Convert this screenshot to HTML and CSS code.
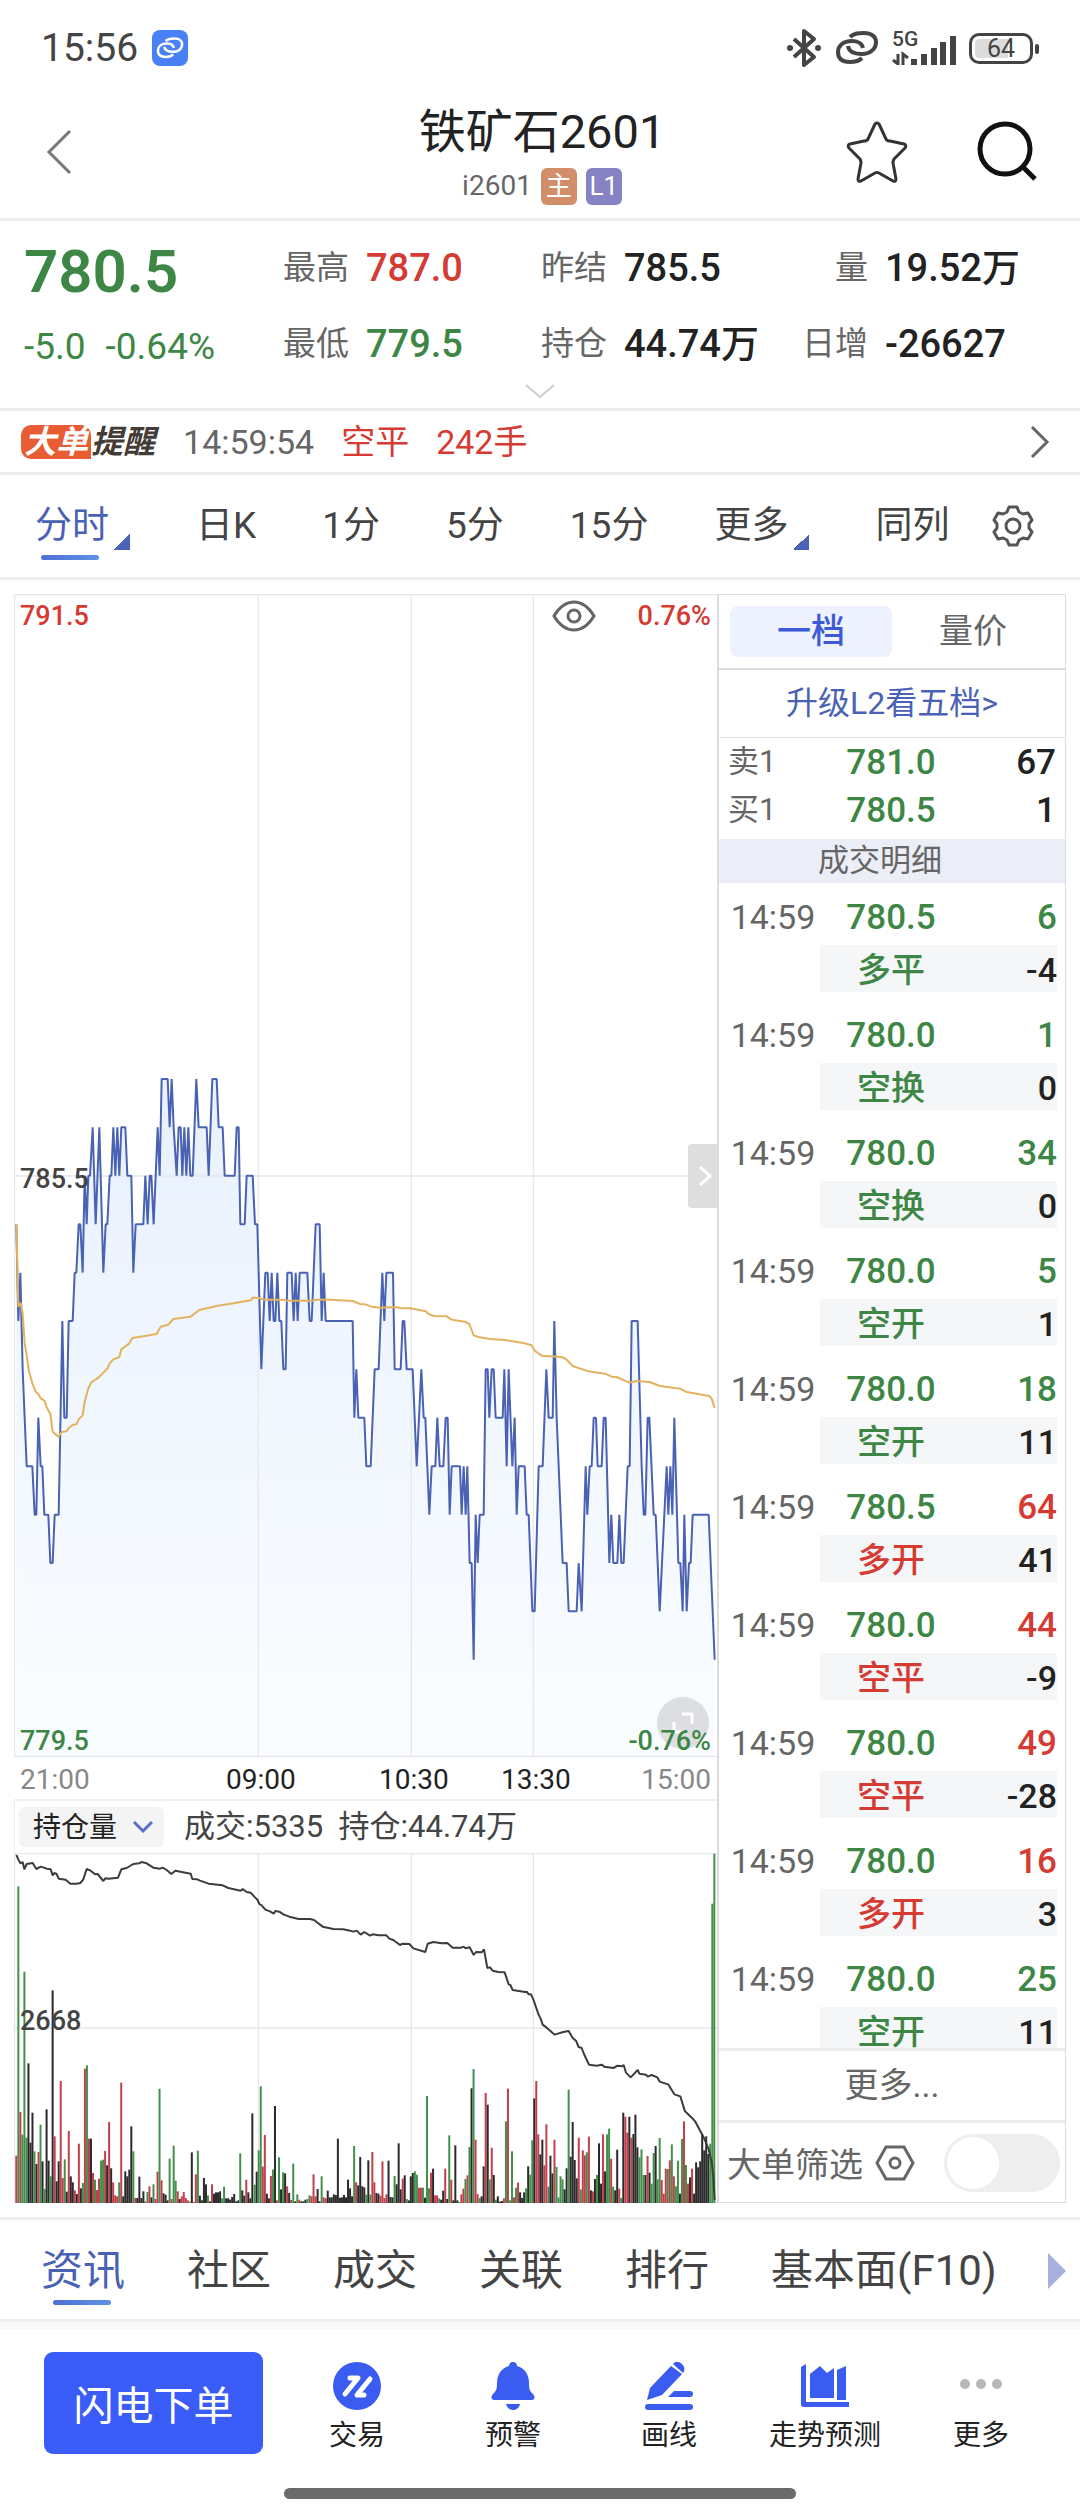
FILE: index.html
```html
<!DOCTYPE html>
<html lang="zh-CN">
<head>
  <meta charset="UTF-8" />
  <meta name="viewport" content="width=device-width, initial-scale=1.0"/>
  <title>铁矿石2601</title>
  <link rel="stylesheet" href="styles.css">
</head>
<body>

<div class="status">
  <span class="clock">15:56</span>
  <span class="app-dot">
    <svg width="28" height="28" viewBox="0 0 44 34" fill="none" stroke="#fff" stroke-width="4"><path d="M15 6c4-4 9-4 14-4 9 0 12 5 12 9 0 8-7 12-14 12-8 0-13-2-14-8"/><path d="M28 17c-1-5-6-7-11-7C8 10 3 15 3 21c0 7 4 10 12 10 6 0 9-1 12-4"/></svg>
  </span>
  <div class="status-icons">
    <svg width="36" height="40" viewBox="0 0 36 40" fill="none" stroke="#444" stroke-width="4" stroke-linejoin="round"><path d="M8 11l20 18-10 8V3l10 8L8 29"/><circle cx="4" cy="20" r="2" fill="#444" stroke-width="2"/><circle cx="32" cy="20" r="2" fill="#444" stroke-width="2"/></svg>
    <svg width="44" height="34" viewBox="0 0 44 34" fill="none" stroke="#444" stroke-width="4"><path d="M15 6c4-4 9-4 14-4 9 0 12 5 12 9 0 8-7 12-14 12-8 0-13-2-14-8"/><path d="M28 17c-1-5-6-7-11-7C8 10 3 15 3 21c0 7 4 10 12 10 6 0 9-1 12-4"/></svg>
    <div class="signal">
      <span class="net">5G</span>
      <svg width="64" height="34" viewBox="0 0 64 34" fill="none" stroke="#444"><path stroke-width="6" d="M22 34v-6M32 34V23M42 34V17M51 34V11M61 34V5"/><path stroke-width="3" d="M6 23v10l-5-4M11 34V23l5 4"/></svg>
    </div>
    <span class="battery">64</span>
  </div>
</div>

<header class="topbar">
  <button class="icon-btn" aria-label="返回">
    <svg width="26" height="46" viewBox="0 0 26 46" fill="none" stroke="#777" stroke-width="3"><path d="M24 2L3 23l21 21"/></svg>
  </button>
  <div class="title">
    <h1>铁矿石2601</h1>
    <p>i2601 <span class="tag tag-main">主</span><span class="tag tag-level">L1</span></p>
  </div>
  <div class="top-actions">
    <button class="icon-btn" aria-label="自选">
      <svg width="62" height="62" viewBox="0 0 62 62" fill="none" stroke="#333" stroke-width="3" stroke-linejoin="round"><path d="M29 3q2-2 4 0l7 15q1 2 4 2l14 3q3 1 1 4L48 38q-1 2-1 4l3 16q0 3-3 2l-14-8q-2-1-4 0l-14 8q-3 1-3-2l3-16q0-2-1-4L3 27q-2-3 1-4l14-3q3 0 4-2z"/></svg>
    </button>
    <button class="icon-btn" aria-label="搜索">
      <svg width="62" height="62" viewBox="0 0 62 62" fill="none" stroke="#111" stroke-width="5"><circle cx="29" cy="28" r="25"/><path d="M47 46l12 12"/></svg>
    </button>
  </div>
</header>

<section class="quote">
  <div class="last green">780.5</div>
  <div class="stat"><span>最高</span><b class="red">787.0</b></div>
  <div class="stat"><span>昨结</span><b>785.5</b></div>
  <div class="stat"><span>量</span><b>19.52万</b></div>
  <div class="change green"><span>-5.0</span><span>-0.64%</span></div>
  <div class="stat"><span>最低</span><b class="green">779.5</b></div>
  <div class="stat"><span>持仓</span><b>44.74万</b></div>
  <div class="stat"><span>日增</span><b>-26627</b></div>
  <button class="icon-btn expand" aria-label="展开">
    <svg width="30" height="16" viewBox="0 0 30 16" fill="none" stroke="#ccc" stroke-width="2"><path d="M1 2l14 12L29 2"/></svg>
  </button>
</section>

<a class="alert" href="#">
  <span class="alert-logo"><i>大单</i><em>提醒</em></span>
  <span class="alert-time">14:59:54</span>
  <span class="red">空平</span>
  <span class="red">242手</span>
  <svg class="alert-arrow" width="20" height="34" viewBox="0 0 20 34" fill="none" stroke="#666" stroke-width="3"><path d="M2 2l15 15L2 32"/></svg>
</a>

<div class="periods">
  <nav>
    <a class="active corner" href="#">分时</a>
    <a href="#">日K</a>
    <a href="#">1分</a>
    <a href="#">5分</a>
    <a href="#">15分</a>
    <a class="corner" href="#">更多</a>
    <a href="#">同列</a>
  </nav>
  <button class="icon-btn" aria-label="设置">
    <svg width="42" height="42" viewBox="0 0 42 42" fill="none" stroke="#555" stroke-width="3" stroke-linejoin="round"><path d="M17 2h8l2 5 4 2 5-1 4 7-3 4v4l3 4-4 7-5-1-4 2-2 5h-8l-2-5-4-2-5 1-4-7 3-4v-4l-3-4 4-7 5 1 4-2z"/><circle cx="21" cy="21" r="7"/></svg>
  </button>
</div>

<main class="board">
  <div class="charts">
    <div class="chart price-chart">
      <svg id="priceChart" viewBox="0 0 2109 3489" preserveAspectRatio="none">
        <defs>
          <linearGradient id="fade" x1="0" y1="1455" x2="0" y2="3489" gradientUnits="userSpaceOnUse">
            <stop offset="0" stop-color="#e8f1fe"/>
            <stop offset="1" stop-color="#fafdff"/>
          </linearGradient>
        </defs>
      </svg>
      <div class="labels">
        <div class="label-row red">
          <span>791.5</span>
          <span class="right-labels">
            <svg width="44" height="32" viewBox="0 0 44 32" fill="none" stroke="#666" stroke-width="3"><path d="M2 16C8 6 15 2 22 2s14 4 20 14c-6 10-13 14-20 14S8 26 2 16z"/><circle cx="22" cy="16" r="6"/></svg>
            <span>0.76%</span>
          </span>
        </div>
        <div class="label-row dark"><span>785.5</span></div>
        <div class="label-row green"><span>779.5</span><span>-0.76%</span></div>
      </div>
      <button class="drawer" aria-label="收起盘口">
        <svg width="14" height="22" viewBox="0 0 14 22" fill="none" stroke="#fff" stroke-width="3"><path d="M2 2l10 9-10 9"/></svg>
      </button>
      <button class="zoom-btn" aria-label="全屏">
        <svg width="22" height="22" viewBox="0 0 22 22" fill="none" stroke="#fff" stroke-width="3"><path d="M10 2h10v10M2 10v10h10"/></svg>
      </button>
    </div>

    <div class="axis">
      <span>21:00</span>
      <span class="tick">09:00</span>
      <span class="tick">10:30</span>
      <span class="tick">13:30</span>
      <span>15:00</span>
    </div>

    <div class="indicator">
      <div class="picker">
        <select aria-label="指标"><option>持仓量</option></select>
        <svg width="20" height="14" viewBox="0 0 20 14" fill="none" stroke="#5a70c8" stroke-width="3"><path d="M1 2l9 9 9-9"/></svg>
      </div>
      <span>成交:5335&nbsp; 持仓:44.74万</span>
    </div>

    <div class="chart volume-chart">
      <svg id="volumeChart" viewBox="0 0 2109 1050" preserveAspectRatio="none"></svg>
      <div class="labels"><div class="label-row middle">2668</div></div>
    </div>
  </div>

  <aside class="book">
    <div class="book-tabs">
      <button class="on">一档</button>
      <button>量价</button>
    </div>
    <a class="upgrade" href="#">升级L2看五档&gt;</a>
    <table class="depth">
      <tr><th>卖1</th><td class="green">781.0</td><td>67</td></tr>
      <tr><th>买1</th><td class="green">780.5</td><td>1</td></tr>
    </table>
    <h2>成交明细</h2>
    <div class="trades">
      <table>
        <tbody id="trades"></tbody>
      </table>
    </div>
    <a class="more" href="#">更多...</a>
    <div class="filter">
      <label for="bigOnly">大单筛选</label>
      <svg width="40" height="36" viewBox="0 0 40 36" fill="none" stroke="#666" stroke-width="3"><path d="M11 2h18l9 16-9 16H11L2 18z"/><circle cx="20" cy="18" r="5"/></svg>
      <input type="checkbox" id="bigOnly">
    </div>
  </aside>
</main>

<nav class="sections">
  <a class="active" href="#">资讯</a>
  <a href="#">社区</a>
  <a href="#">成交</a>
  <a href="#">关联</a>
  <a href="#">排行</a>
  <a href="#">基本面(F10)</a>
  <svg width="18" height="36" viewBox="0 0 18 36" fill="#a5b0dd"><path d="M0 0l18 18L0 36z"/></svg>
</nav>

<footer class="actions">
  <button class="order">闪电下单</button>
  <a href="#">
    <svg width="48" height="48" viewBox="0 0 48 48"><circle cx="24" cy="24" r="24" fill="#3a5cf0"/><path d="M17 16h8L12 32M37 17L24 33h7" fill="none" stroke="#fff" stroke-width="5" stroke-linejoin="round" stroke-linecap="round"/></svg>
    交易
  </a>
  <a href="#">
    <svg width="48" height="48" viewBox="0 0 48 48" fill="#3a5cf0"><path d="M24 0c3 0 4 2 4 4 8 2 12 9 12 17 0 7 1 8 4 11 3 4 1 6-1 6H5c-2 0-4-2-1-6 3-3 4-4 4-11C8 13 12 6 20 4c0-2 1-4 4-4zM17 42h14c-1 4-4 6-7 6s-6-2-7-6z"/></svg>
    预警
  </a>
  <a href="#">
    <svg width="48" height="48" viewBox="0 0 48 48" fill="#3a5cf0"><path d="M26 4l11 8-20 21L2 38l3-12zM28 2c2-3 6-3 9 0s3 6 1 9z"/><path d="M29 29h16a3 3 0 0 1 0 6H23zM3 42h42a3 3 0 0 1 0 6H3a3 3 0 0 1 0-6z"/></svg>
    画线
  </a>
  <a href="#">
    <svg width="48" height="48" viewBox="0 0 48 48" fill="#3a5cf0"><path d="M0 5l5-3v38h43v5H3q-3 0-3-3zM9 36V12l10-8 7 7 7-5v30zM36 36V8l9-4v34h-9z"/></svg>
    走势预测
  </a>
  <a href="#">
    <svg width="48" height="48" viewBox="0 0 48 48" fill="#b8b8b8"><circle cx="8" cy="22" r="5"/><circle cx="24" cy="22" r="5"/><circle cx="40" cy="22" r="5"/></svg>
    更多
  </a>
</footer>
<div class="home-bar"></div>

<script src="script.js"></script>
</body>
</html>
```

FILE: styles.css
```css
* {
  box-sizing: border-box;
}
body {
  margin: 0;
  background: #fff;
  color: #222;
  font-family: Roboto, "Noto Sans CJK SC", sans-serif;
}
a {
  color: inherit;
  text-decoration: none;
}
button {
  font-family: inherit;
  border: none;
  padding: 0;
  background: none;
  cursor: pointer;
}
svg {
  display: block;
  flex-shrink: 0;
}
.icon-btn {
  display: block;
}
.green {
  color: #3d8645;
}
.red {
  color: #d53a33;
}

/* phone status bar */
.status {
  display: flex;
  align-items: center;
  height: 96px;
  padding: 0 47px 0 41px;
  color: #444;
}
.clock {
  font-size: 39px;
}
.app-dot {
  display: flex;
  align-items: center;
  justify-content: center;
  width: 36px;
  height: 36px;
  margin-left: 14px;
  border-radius: 8px;
  background: #4a80f5;
}
.status-icons {
  display: flex;
  align-items: center;
  gap: 13px;
  margin-left: auto;
}
.signal {
  display: grid;
}
.signal > * {
  grid-area: 1 / 1;
}
.net {
  font-size: 21px;
  line-height: 16px;
  font-weight: 500;
}
.battery {
  position: relative;
  width: 64px;
  height: 31px;
  padding: 3px;
  border: 3px solid #444;
  border-radius: 10px;
  background: linear-gradient(90deg, #dcdcdc 64%, #fff 64%) content-box;
  font-size: 25px;
  line-height: 20px;
  text-align: center;
}
.battery::after {
  content: "";
  position: absolute;
  right: -9px;
  top: 8px;
  width: 4px;
  height: 10px;
  border-radius: 2px;
  background: #444;
}

/* title */
.topbar {
  display: grid;
  grid-template-columns: 1fr auto 1fr;
  align-items: center;
  height: 125px;
  padding: 0 42px 14px 46px;
  border-bottom: 3px solid #eee;
}
.title {
  padding-top: 4px;
  text-align: center;
}
.title h1 {
  margin: 0;
  font-size: 47px;
  line-height: 64px;
  font-weight: 400;
}
.title p {
  display: flex;
  align-items: center;
  justify-content: center;
  gap: 9px;
  margin: 0;
  font-size: 28px;
  line-height: 44px;
  color: #666;
}
.tag {
  width: 36px;
  height: 37px;
  border-radius: 6px;
  color: #fff;
  font-size: 26px;
  line-height: 37px;
}
.tag-main {
  background: #d28e69;
}
.tag-level {
  background: #8583c3;
}
.top-actions {
  display: flex;
  justify-content: flex-end;
  gap: 68px;
}

/* quote numbers */
.quote {
  display: grid;
  grid-template-columns: 257fr 258fr 261fr 256fr;
  grid-template-rows: 92px 60px 34px;
  align-items: center;
  padding: 1px 24px 0;
  border-bottom: 3px solid #eee;
}
.last {
  padding-top: 6px;
  font-size: 60px;
  font-weight: 600;
}
.change {
  display: flex;
  gap: 20px;
  padding-top: 4px;
  font-size: 37px;
}
.stat {
  display: flex;
  align-items: center;
  gap: 17px;
  white-space: nowrap;
}
.stat span {
  width: 68px;
  font-size: 33px;
  line-height: 46px;
  color: #666;
  text-align: right;
}
.stat b {
  font-size: 38px;
  line-height: 48px;
  font-weight: 500;
}
.expand {
  grid-column: 1 / -1;
  justify-self: center;
}

/* big order alert */
.alert {
  display: flex;
  align-items: center;
  height: 64px;
  padding: 0 30px 0 21px;
  border-bottom: 3px solid #eee;
  font-size: 34px;
  line-height: 40px;
}
.alert-logo {
  display: flex;
  margin-right: 28px;
  font-size: 32px;
  line-height: 34px;
  font-weight: 700;
}
.alert-logo i {
  padding: 0 3px;
  border-radius: 10px 10px 0 10px;
  background: #e85c34;
  color: #fff;
}
.alert-logo em {
  color: #443a36;
}
.alert-time {
  color: #666;
}
.alert .red {
  margin-left: 27px;
}
.alert-arrow {
  margin-left: auto;
}

/* chart period tabs */
.periods {
  display: flex;
  align-items: center;
  justify-content: space-between;
  height: 105px;
  padding: 0 46px 0 35px;
  border-bottom: 3px solid #eee;
}
.periods nav {
  display: flex;
  gap: 66px;
  font-size: 37px;
  line-height: 56px;
  color: #444;
}
.corner {
  padding-right: 21px;
  background: linear-gradient(135deg, transparent 50%, #4a62b8 50%) right 0 bottom 4px / 16px 16px no-repeat;
}
.periods a,
.sections a {
  position: relative;
}
.periods .active,
.sections .active {
  color: #4a62b3;
}
.periods .active::after,
.sections .active::after {
  content: "";
  position: absolute;
  left: 6px;
  bottom: -6px;
  width: 58px;
  height: 5px;
  border-radius: 3px;
  background: linear-gradient(90deg, #4f6fd4, #5f92e6);
}

/* charts and order book */
.board {
  display: grid;
  grid-template-columns: 703fr 349fr;
  padding: 14px;
  border-bottom: 3px solid #eee;
}
.charts {
  min-width: 0;
}
.chart {
  display: grid;
  position: relative;
}
.chart > svg,
.labels {
  grid-area: 1 / 1;
  width: 100%;
}
.price-chart {
  height: 1163px;
}
.volume-chart {
  height: 350px;
}
.chart > svg {
  height: 100%;
  min-height: 0;
}
.labels {
  display: flex;
  flex-direction: column;
  justify-content: space-between;
  padding: 6px 6px 0;
  font-size: 27px;
  line-height: 32px;
  font-weight: 500;
  z-index: 1;
}
.label-row {
  display: flex;
  justify-content: space-between;
}
.dark,
.middle {
  color: #444;
}
.volume-chart .labels {
  justify-content: center;
  padding: 0 6px 14px;
}
.right-labels {
  display: flex;
  align-items: center;
  gap: 42px;
}
.drawer {
  position: absolute;
  right: 0;
  top: 550px;
  width: 29px;
  height: 64px;
  padding-left: 10px;
  border-radius: 4px 0 0 4px;
  background: #dedede;
}
.zoom-btn {
  position: absolute;
  right: 8px;
  bottom: 8px;
  width: 52px;
  height: 52px;
  padding-left: 15px;
  border-radius: 50%;
  background: #dcdee1;
}
.axis {
  display: grid;
  grid-template-columns: 206fr 153fr 122fr 140fr 70fr;
  height: 44px;
  padding: 0 6px;
  border-bottom: 2px solid #f0f0f0;
  font-size: 28px;
  line-height: 46px;
  color: #888;
}
.axis .tick {
  color: #222;
}
.axis span:last-child {
  text-align: right;
}
.indicator {
  display: flex;
  align-items: center;
  gap: 20px;
  height: 52px;
  padding-left: 4px;
  border-left: 1px solid #eee;
  font-size: 31px;
  line-height: 44px;
  color: #444;
}
.picker {
  display: grid;
  align-items: center;
}
.picker > * {
  grid-area: 1 / 1;
}
.picker svg {
  justify-self: end;
  margin-right: 11px;
  pointer-events: none;
}
.picker select {
  appearance: none;
  width: 145px;
  height: 40px;
  padding: 0 0 0 14px;
  border: none;
  border-radius: 6px;
  background: #f4f4f4;
  color: #222;
  font-family: inherit;
  font-size: 28px;
}

.book {
  display: flex;
  flex-direction: column;
  border: 1px solid #dcdcdc;
  border-left-width: 2px;
}
.book-tabs {
  display: flex;
  padding: 11px;
  border-bottom: 2px solid #dcdcdc;
}
.book-tabs button {
  flex: 1;
  height: 51px;
  border-radius: 8px;
  font-size: 34px;
  line-height: 51px;
  color: #666;
}
.book-tabs .on {
  background: #eef1fe;
  color: #3c5ad8;
  font-weight: 500;
}
.upgrade {
  border-bottom: 1px solid #e4e4e4;
  font-size: 32px;
  line-height: 67px;
  text-align: center;
  color: #4a62b3;
}
.book table {
  width: 100%;
  table-layout: fixed;
  border-spacing: 0;
}
.book th,
.book td {
  padding: 0;
  font-weight: 500;
  font-size: 35px;
  text-align: center;
}
.book th:first-child,
.book td:first-child {
  width: 101px;
}
.book td:nth-child(2) {
  width: 142px;
}
.book td:last-child {
  text-align: right;
}
.depth {
  padding: 0 9px 5px 0;
}
.depth tr {
  height: 48px;
}
.book .depth th {
  padding-left: 9px;
  font-size: 31px;
  line-height: 40px;
  font-weight: 400;
  text-align: left;
  color: #666;
}
.book h2 {
  margin: 0;
  padding-right: 24px;
  background: #ebeef7;
  font-size: 31px;
  line-height: 44px;
  font-weight: 400;
  text-align: center;
  color: #666;
}
.trades {
  max-height: 1165px;
  padding-right: 8px;
  overflow: hidden;
}
.book .trades td {
  height: 62px;
  padding-top: 6px;
  line-height: 47px;
}
.book .trades .time {
  padding-left: 7px;
  font-size: 34px;
  font-weight: 400;
  color: #666;
}
.book .trades .kind td {
  height: 56px;
  padding: 3px 0 0;
  border-bottom: 9px solid #fff;
  background: #f5f6f8;
  font-size: 34px;
  line-height: 38px;
}
.book .trades .kind td:first-child {
  background: none;
}
.more {
  border-top: 3px solid #eee;
  border-bottom: 3px solid #eee;
  font-size: 34px;
  line-height: 69px;
  text-align: center;
  color: #666;
}
.filter {
  display: flex;
  flex: 1;
  align-items: center;
  padding: 0 5px 0 8px;
  font-size: 34px;
  color: #666;
}
.filter svg {
  margin-left: 12px;
}
.filter input {
  appearance: none;
  width: 116px;
  height: 58px;
  margin: 0 0 0 auto;
  padding: 3px;
  border-radius: 29px;
  background: #eee;
}
.filter input::before {
  content: "";
  display: block;
  width: 52px;
  height: 52px;
  border-radius: 50%;
  background: #fff;
}
.filter input:checked::before {
  margin-left: auto;
}

/* bottom */
.sections {
  display: flex;
  align-items: center;
  gap: 62px;
  height: 102px;
  padding: 2px 14px 0 41px;
  border-bottom: 3px solid #eee;
  font-size: 42px;
  line-height: 60px;
  color: #444;
  white-space: nowrap;
}
.sections .active::after {
  left: 12px;
  bottom: -4px;
}
.sections svg {
  margin: 0 0 0 auto;
}
.sections a:nth-last-of-type(1) {
  margin-right: -20px;
}
.actions {
  display: flex;
  align-items: center;
  height: 159px;
  padding: 0 21px 4px 44px;
  border-top: 7px solid #f8f8f8;
}
.order {
  width: 219px;
  height: 102px;
  margin-right: 16px;
  border-radius: 9px;
  background: #3a5cf8;
  color: #fff;
  font-size: 40px;
}
.actions a {
  display: flex;
  flex: 1;
  flex-direction: column;
  align-items: center;
  gap: 5px;
  padding-top: 12px;
  font-size: 28px;
  line-height: 42px;
  white-space: nowrap;
}
.home-bar {
  width: 512px;
  height: 11px;
  margin: 7px auto 20px;
  border-radius: 6px;
  background: #6b6b6b;
}
```

FILE: script.js
```js
const NS = "http://www.w3.org/2000/svg";

function add(svg, tag, attrs) {
  const el = document.createElementNS(NS, tag);
  for (const key in attrs) el.setAttribute(key, attrs[key]);
  svg.appendChild(el);
}

// "x y x y ..." -> [[x, y], ...], moved by dx / dy
function series(text, dx, dy) {
  const n = text.trim().split(/\s+/).map(Number);
  const out = [];
  for (let i = 0; i < n.length; i += 2) out.push([n[i] + dx, n[i + 1] + dy]);
  return out;
}

function line(svg, points, color, width) {
  add(svg, "polyline", {
    points: points.map(p => p.join(",")).join(" "),
    fill: "none", stroke: color, "stroke-width": width, "stroke-linejoin": "bevel"
  });
}

function grid(svg, height, middle) {
  const d = `M2 0V${height}M733 0V${height}M1192 0V${height}M1558 0V${height}M0 2H2109M0 ${middle}H2109M0 ${height - 2}H2109`;
  add(svg, "path", { d, stroke: "#e6e8ee", "stroke-width": 4, fill: "none" });
}

// price: x, ticks below 786.5
const night = `49 3 55 5 61 4 68 6 80 8 97 8 104 9 109 9 115 7 122 8 127 8 133 9 145 9 151 10 158 10 164 9 176 9
  187 5 193 7 200 7 206 5 218 5 224 4 229 4 236 3 241 3 248 4 254 2 260 3 265 2 270 2 278 1 287 3 298 1 310 4
  317 3 322 3 329 2 334 2 340 1 346 2 352 1 358 2 364 1 376 1 382 2 394 2 400 4 407 3 430 3 436 2 443 3 449 2
  454 2 461 3 473 1 479 2 485 0 503 0 509 1 515 0 521 1 530 2 536 1 542 1 547 2 553 1 559 2 565 1 571 2 578 2
  589 0 596 1 620 1 626 2 637 0 650 0 656 1 668 1 674 2 704 2 710 1 716 1 721 3 734 3 740 2 758 2 765 3 772 3
  784 6 796 4 803 4 809 5 815 4 821 5 826 5 832 4 838 5 844 5 850 6 857 6 862 4 875 4 881 5 887 4 893 5 899 4
  922 4 929 5 935 5 947 3 959 3 965 5 971 4 977 5`;
const day = `8 5 13 7 19 6 25 7 43 7 49 8 62 8 74 6 86 6 97 4 103 5 109 4 129 4 134 6 152 6 158 5 163 5 170 6 188 6
  200 8 214 6 221 7 226 7 238 9 245 8 256 8 262 7 269 8 280 8 287 7 293 7 299 9 305 8 330 8 335 9 341 8 347 9
  352 8 359 10 365 10 371 12 377 9 383 10 389 9 401 9 407 6 413 6 418 7 425 6 431 6 437 7 458 7 463 6 470 8
  476 6 487 8 494 7 500 9 506 8 524 8 530 9 536 9 547 11 554 11 566 8 578 8 589 6 596 7 608 7 613 5 620 7
  638 10 650 10 656 11 680 11 686 10 695 11 707 8 712 9 719 8 725 8 731 7 738 7 743 8 755 8 761 7 767 7
  778 10 784 9 790 10 802 10 808 9 814 10 821 10 833 8 839 8 845 5 863 5 875 8 881 9 886 9 893 7 898 7 911 9
  917 9 929 11 950 8 955 9 961 8 967 9 973 7 985 10 991 10 998 11 1003 9 1010 11 1017 10 1022 10 1028 9
  1076 9 1094 12`;
const price = series(night, -42, 0).concat(series(day, 1008, 0)).map(p => [p[0], Math.round(1455 + p[1] * 145.2)]);

const average = series(`49 492 55 740 62 728 68 760 74 850 80 885 86 930 97 970 107 995 115 1002 122 1015 134 1023
  140 1042 151 1062 158 1115 175 1130 185 1116 200 1114 206 1104 218 1095 229 1093 236 1078 248 1066 254 1025
  265 985 274 967 295 953 322 926 329 910 340 898 358 891 364 868 388 850 397 834 430 829 470 822 482 800
  505 794 520 777 572 770 598 750 650 738 700 730 752 721 758 713 778 714 790 719 850 719 860 722 935 722
  950 719 990 719`, -42, 1398).concat(series(`8 363 30 372 45 373 65 380 90 383 135 381 150 384 180 385 228 394
  235 402 252 408 290 409 305 419 345 425 358 432 365 450 371 466 385 471 420 477 465 480 520 489 545 496
  555 513 575 527 635 531 648 537 668 558 715 574 765 581 785 590 800 591 838 608 860 603 898 606 930 618
  990 626 1010 636 1078 648 1085 656 1094 684`, 1008, 1758));

const interest = series(`49 45 55 58 61 70 68 66 73 88 80 72 98 69 109 87 122 80 140 86 152 88 158 106 163 99
  170 102 176 116 197 119 211 131 229 131 241 129 250 118 260 87 272 92 285 103 293 102 310 123 316 115
  325 116 354 113 364 88 380 84 400 72 418 70 424 66 440 70 460 83 480 86 488 83 500 90 514 102 526 92
  572 101 577 117 592 118 600 122 626 131 668 136 685 144 722 152 728 147 740 156 752 158 765 172 773 180
  778 192 785 196 796 209 810 214 821 221 826 213 838 215 850 223 868 230 896 237 930 237 942 240 968 260
  1000 267 1030 268`, -42, -39).concat(series(`0 272 10 275 20 272 32 284 43 276 60 287 68 283 85 286 109 286
  118 296 130 300 150 315 158 311 178 312 190 325 226 336 233 311 250 306 275 310 292 309 308 323 333 323
  341 320 347 325 359 322 371 345 378 336 395 337 402 328 412 384 420 382 428 392 445 396 464 397 476 433
  481 435 488 450 525 456 530 455 536 463 543 463 550 478 565 522 572 536 578 554 590 563 614 584 640 576
  656 573 668 594 678 602 686 621 695 624 702 642 717 674 740 677 755 674 763 680 790 684 803 677 815 679
  821 675 828 698 842 712 863 690 868 701 888 704 893 710 905 705 922 712 929 725 956 734 960 742 973 763
  991 769 1005 814 1030 838 1036 845 1060 890 1075 925 1085 965 1090 1010 1094 1080`, 1008, -39));

// volume per minute, r = up, g = down, k = flat
const volume = [
  { from: 7, to: 715, bars: `r142 g950 r273 g205 g694 g196 k419 k181 k271 g155 k117 r153 g235 k125 g42 k281 k127 g80
    k638 r200 k65 k125 r366 r75 g131 k34 r216 k80 k62 r38 k27 r178 k44 g60 r403 g413 r193 k193 r90 g70 r39 r73 g127
    g130 r156 k113 r243 k104 r62 r23 r20 g62 r361 k20 k95 k80 k100 k230 g155 r15 k15 k79 k15 k35 r5 g33 r50 k17 g56
    r12 r94 g343 r68 k29 k25 k8 g133 r12 g172 g67 r35 k12 r20 r33 r15 r8 g4 k152 r3 r86 g157 k22 k8 k75 k56 g23 k5
    r56 k28 k32 k32 k35 g14 g49 k14 k14 k10 k18 k27 k5 k8 g149 k38 k22 r70 k32 k14 k269` },
  { from: 722, to: 1063, bars: `g55 k94 g158 g350 r109 r204 k28 k14 r81 g100 k291 r8 g137 k41 g92 k89 r50 k30 r9 g118
    k5 g26 r10 k5 k5 k10 g12 g23 r20 r86 r20 k42 k5 g80 r17 r14 k37 k17 k17 k26 k24 k193 k16 k17 k24 k17 k70 k44 k20
    g171 r62 k53 k138 k50 k47 g25 k128` },
  { from: 1069, to: 1579, bars: `g25 r153 r62 k30 k28 r22 r125 r15 r26 k127 k18 k17 g81 k56 k179 k41 r73 k83 g12 k8
    k80 k90 g95 g85 r46 r46 g46 k16 g321 g44 r91 k103 r23 r23 g14 k10 k37 r103 k12 g203 r70 k8 k173 k8 g3 r26 r43
    g72 r83 g168 k344 g402 r190 r27 g15 k20 k110 r330 k295 g71 r166 k84 g10 k20 k4 k6 r14 g245 r343 g8 g155 r17
    g46 r61 k32 k15 k32 g44 k110 g85 g188 k314 r366 r206 k146` },
  { from: 1585, to: 2101, bars: `k190 r113 r236 g49 k142 k89 r190 g108 g17 g80 g71 k41 k104 g340 k139 k243 k129 k74
    r196 g41 r158 r143 g152 r199 k38 r35 k72 g84 k179 k58 r206 k95 g206 g223 r133 g49 k38 k160 r43 g15 k271 r259
    r211 k259 r196 k207 k265 k167 g137 g161 g84 k84 r141 k91 g58 g150 k171 g71 g195 r69 r28 r103 g102 r128 g176
    r80 g50 g127 k28 g192 r245 g114 r58 k77 r103 k28 k122 k107 k125 k205 k158 k200 k147 g178 g898 g1048` }
];
const barColors = { r: "#c23f4c", g: "#43904d", k: "#2b2b2b" };

const priceChart = document.getElementById("priceChart");
const last = price[price.length - 1];
add(priceChart, "polygon", {
  points: price.map(p => p.join(",")).join(" ") + ` ${last[0]},3489 7,3489`,
  fill: "url(#fade)"
});
grid(priceChart, 3489, 1746);
line(priceChart, price, "#4a62b3", 6);
line(priceChart, average, "#e4b25f", 6);

const volumeChart = document.getElementById("volumeChart");
grid(volumeChart, 1050, 525);
volume.forEach(part => {
  const bars = part.bars.trim().split(/\s+/);
  const step = (part.to - part.from) / (bars.length - 1);
  bars.forEach((bar, i) => {
    const h = Number(bar.slice(1));
    add(volumeChart, "rect", {
      x: part.from + i * step - 3, y: 1050 - h, width: 6, height: h, fill: barColors[bar[0]]
    });
  });
});
line(volumeChart, interest, "#3c3c3c", 6);

const trades = [
  ["780.5", 6, "多平", -4, "green"],
  ["780.0", 1, "空换", 0, "green"],
  ["780.0", 34, "空换", 0, "green"],
  ["780.0", 5, "空开", 1, "green"],
  ["780.0", 18, "空开", 11, "green"],
  ["780.5", 64, "多开", 41, "red"],
  ["780.0", 44, "空平", -9, "red"],
  ["780.0", 49, "空平", -28, "red"],
  ["780.0", 16, "多开", 3, "red"],
  ["780.0", 25, "空开", 11, "green"]
];
document.getElementById("trades").innerHTML = trades.map(([p, qty, kind, diff, color]) =>
  `<tr><td class="time">14:59</td><td class="green">${p}</td><td class="${color}">${qty}</td></tr>
   <tr class="kind"><td></td><td class="${color}">${kind}</td><td>${diff}</td></tr>`
).join("");
```
